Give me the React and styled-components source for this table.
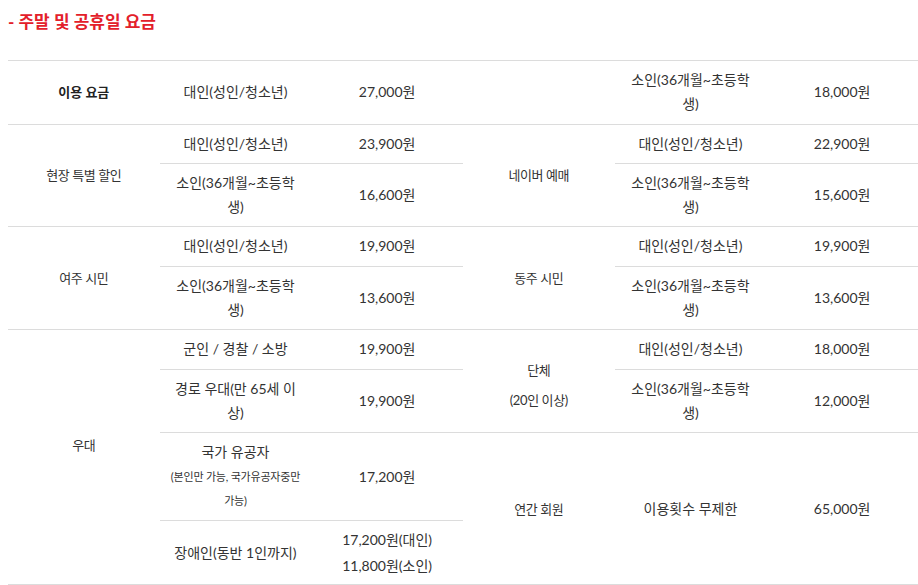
import React from "react";
import styled, { createGlobalStyle } from "styled-components";

const GlobalStyle = createGlobalStyle`
  html, body {
    margin: 0;
    padding: 0;
    background: #fff;
    overflow: hidden;
  }

  body {
    font-family: "Lato", "Noto Sans CJK KR", sans-serif;
    color: #333;
  }
`;

const Page = styled.div`
  padding-left: 8px;
`;

const Title = styled.h3`
  margin: 10px 0 26px;
  font-size: 17px;
  line-height: 24px;
  font-weight: 700;
  color: #e3202a;
`;

const PriceTable = styled.table`
  width: 100%;
  border-collapse: collapse;
  table-layout: fixed;
  border-top: 1px solid #dcdcdc;
`;

const Cell = styled.td`
  padding: 7px 4px;
  border-bottom: 1px solid #dcdcdc;
  text-align: center;
  vertical-align: middle;
  white-space: nowrap;
  line-height: 24.3px;
  font-size: 14px;
  color: #333;
`;

const Head = styled(Cell)`
  font-size: 13px;
  font-weight: 700;
  color: #222;
`;

const Cat = styled(Cell)`
  font-size: 13px;
  letter-spacing: -0.4px;
  padding-top: ${({ $shift = 0 }) => 7 + Math.max($shift, 0) * 2}px;
  padding-bottom: ${({ $shift = 0 }) => 7 - Math.min($shift, 0) * 2}px;
`;

const Price = styled(Cell)`
  line-height: ${({ $tight }) => ($tight ? "25.5px" : "24.3px")};
  padding-top: ${({ $tight }) => ($tight ? 6 : 7)}px;
  padding-bottom: ${({ $tight }) => ($tight ? 6 : 7)}px;
`;

const Note = styled.div`
  font-size: 11px;
  line-height: 24.3px;
  letter-spacing: -0.2px;
`;

const NextLine = styled.div`
  margin-top: 5.7px;
`;

const KID = (
  <>
    소인(36개월~초등학
    <br />생)
  </>
);
const ADULT = "대인(성인/청소년)";

export default function App() {
  return (
    <Page>
      <GlobalStyle />
      <Title>- 주말 및 공휴일 요금</Title>
      <PriceTable>
        <colgroup>
          {[0, 1, 2, 3, 4, 5].map((i) => (
            <col key={i} style={{ width: `${100 / 6}%` }} />
          ))}
        </colgroup>
        <tbody>
          <tr>
            <Head>이용 요금</Head>
            <Cell>{ADULT}</Cell>
            <Price>27,000원</Price>
            <Cat />
            <Cell>{KID}</Cell>
            <Price>18,000원</Price>
          </tr>

          <tr>
            <Cat rowSpan={2}>현장 특별 할인</Cat>
            <Cell>{ADULT}</Cell>
            <Price>23,900원</Price>
            <Cat rowSpan={2}>네이버 예매</Cat>
            <Cell>{ADULT}</Cell>
            <Price>22,900원</Price>
          </tr>
          <tr>
            <Cell>{KID}</Cell>
            <Price>16,600원</Price>
            <Cell>{KID}</Cell>
            <Price>15,600원</Price>
          </tr>

          <tr>
            <Cat rowSpan={2}>여주 시민</Cat>
            <Cell>{ADULT}</Cell>
            <Price>19,900원</Price>
            <Cat rowSpan={2}>동주 시민</Cat>
            <Cell>{ADULT}</Cell>
            <Price>19,900원</Price>
          </tr>
          <tr>
            <Cell>{KID}</Cell>
            <Price>13,600원</Price>
            <Cell>{KID}</Cell>
            <Price>13,600원</Price>
          </tr>

          <tr>
            <Cat rowSpan={4} $shift={-12}>
              우대
            </Cat>
            <Cell>군인 / 경찰 / 소방</Cell>
            <Price>19,900원</Price>
            <Cat rowSpan={2} $shift={3.5}>
              단체
              <NextLine>(20인 이상)</NextLine>
            </Cat>
            <Cell>{ADULT}</Cell>
            <Price>18,000원</Price>
          </tr>
          <tr>
            <Cell>
              경로 우대(만 65세 이
              <br />상)
            </Cell>
            <Price>19,900원</Price>
            <Cell>{KID}</Cell>
            <Price>12,000원</Price>
          </tr>
          <tr>
            <Cell>
              국가 유공자
              <Note>
                (본인만 가능, 국가유공자중만
                <br />
                가능)
              </Note>
            </Cell>
            <Price>17,200원</Price>
            <Cat rowSpan={2}>연간 회원</Cat>
            <Cell rowSpan={2}>이용횟수 무제한</Cell>
            <Price rowSpan={2}>65,000원</Price>
          </tr>
          <tr>
            <Cell>장애인(동반 1인까지)</Cell>
            <Price $tight>
              17,200원(대인)
              <br />
              11,800원(소인)
            </Price>
          </tr>
        </tbody>
      </PriceTable>
    </Page>
  );
}
